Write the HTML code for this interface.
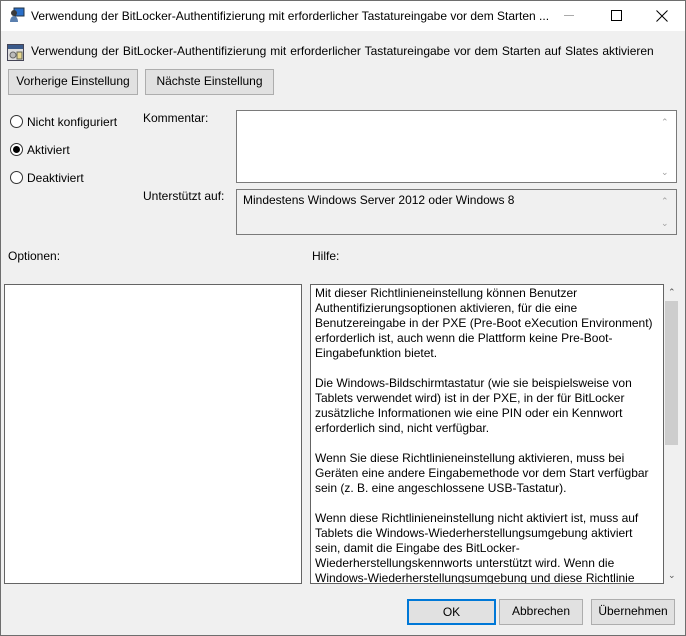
<!DOCTYPE html>
<html><head><meta charset="utf-8"><style>
*{margin:0;padding:0;box-sizing:border-box}
body{width:686px;height:636px;overflow:hidden;background:#f0f0f0;font-family:"Liberation Sans",sans-serif;font-size:12px;color:#000;position:relative}
.a{position:absolute;white-space:nowrap}
.win{position:absolute;left:0;top:0;width:686px;height:636px;border:1px solid #6e6e6e}
.title{position:absolute;left:1px;top:1px;width:684px;height:30px;background:#fff}
.btn{position:absolute;background:#e1e1e1;border:1px solid #adadad;text-align:center;line-height:23px}
.radio{position:absolute;left:10px;width:13px;height:13px;border:1px solid #333;border-radius:50%;background:#fff}
.box{position:absolute;border:1px solid #7a7a7a;background:#fff}
.helpclip{position:absolute;left:311px;top:285px;width:352px;height:298px;overflow:hidden}
.help{position:absolute;left:4px;top:1px;line-height:15px;white-space:pre;font-size:12px}
.arr{position:absolute;color:#a0a0a0;font-size:9px}
</style></head><body>
<div class="win"></div>
<div class="title"></div>
<svg class="a" style="left:9px;top:7px" width="16" height="16" viewBox="0 0 16 16"><rect x="5" y="1" width="10" height="8" fill="#2a6fc9" stroke="#234"/><circle cx="5" cy="6" r="3" fill="#3a3a3a"/><path d="M1 15c0-4 2-6 4-6s4 2 4 6z" fill="#5a7fae"/></svg>
<div class="a" style="left:31px;top:9px">Verwendung der BitLocker-Authentifizierung mit erforderlicher Tastatureingabe vor dem Starten ...</div>
<div class="a" style="left:564px;top:15px;width:10px;height:1px;background:#aaa"></div>
<div class="a" style="left:611px;top:10px;width:11px;height:11px;border:1px solid #000"></div>
<svg class="a" style="left:656px;top:10px" width="12" height="12"><path d="M0.5 0.5L11.5 11.5M11.5 0.5L0.5 11.5" stroke="#000" stroke-width="1"/></svg>
<svg class="a" style="left:7px;top:44px" width="17" height="17" viewBox="0 0 17 17"><rect x="0.5" y="0.5" width="16" height="16" fill="#ddd" stroke="#445"/><rect x="1" y="1" width="15" height="4" fill="#3a5a8a"/><circle cx="6" cy="11" r="3" fill="#bbb" stroke="#666"/><rect x="10" y="8" width="5" height="7" fill="#e8d890" stroke="#665"/></svg>
<div class="a" style="left:31px;top:44px;word-spacing:0.6px">Verwendung der BitLocker-Authentifizierung mit erforderlicher Tastatureingabe vor dem Starten auf Slates aktivieren</div>
<div class="btn" style="left:8px;top:69px;width:130px;height:26px">Vorherige Einstellung</div>
<div class="btn" style="left:145px;top:69px;width:129px;height:26px">Nächste Einstellung</div>
<div class="radio" style="top:115px"></div><div class="a" style="left:27px;top:115px">Nicht konfiguriert</div>
<div class="radio" style="top:143px"></div><div class="a" style="left:13px;top:146px;width:7px;height:7px;border-radius:50%;background:#000"></div><div class="a" style="left:27px;top:143px">Aktiviert</div>
<div class="radio" style="top:171px"></div><div class="a" style="left:27px;top:171px">Deaktiviert</div>
<div class="a" style="left:143px;top:111px">Kommentar:</div>
<div class="box" style="left:236px;top:110px;width:441px;height:73px"></div>
<div class="arr" style="left:661px;top:117px">&#8963;</div><div class="arr" style="left:661px;top:167px">&#8964;</div>
<div class="a" style="left:143px;top:189px">Unterstützt auf:</div>
<div class="box" style="left:236px;top:189px;width:441px;height:46px;background:#f0f0f0"></div>
<div class="a" style="left:243px;top:193px">Mindestens Windows Server 2012 oder Windows 8</div>
<div class="arr" style="left:661px;top:196px">&#8963;</div><div class="arr" style="left:661px;top:218px">&#8964;</div>
<div class="a" style="left:8px;top:249px">Optionen:</div>
<div class="a" style="left:312px;top:249px">Hilfe:</div>
<div class="box" style="left:4px;top:284px;width:298px;height:300px;border-color:#646464"></div>
<div class="box" style="left:310px;top:284px;width:354px;height:300px;border-color:#646464"></div>
<div class="helpclip"><div class="help">Mit dieser Richtlinieneinstellung können Benutzer
Authentifizierungsoptionen aktivieren, für die eine
Benutzereingabe in der PXE (Pre-Boot eXecution Environment)
erforderlich ist, auch wenn die Plattform keine Pre-Boot-
Eingabefunktion bietet.

Die Windows-Bildschirmtastatur (wie sie beispielsweise von
Tablets verwendet wird) ist in der PXE, in der für BitLocker
zusätzliche Informationen wie eine PIN oder ein Kennwort
erforderlich sind, nicht verfügbar.

Wenn Sie diese Richtlinieneinstellung aktivieren, muss bei
Geräten eine andere Eingabemethode vor dem Start verfügbar
sein (z. B. eine angeschlossene USB-Tastatur).

Wenn diese Richtlinieneinstellung nicht aktiviert ist, muss auf
Tablets die Windows-Wiederherstellungsumgebung aktiviert
sein, damit die Eingabe des BitLocker-
Wiederherstellungskennworts unterstützt wird. Wenn die
Windows-Wiederherstellungsumgebung und diese Richtlinie</div></div>
<div class="a" style="left:665px;top:301px;width:13px;height:144px;background:#cdcdcd"></div>
<div class="arr" style="left:668px;top:287px;color:#555">&#8963;</div><div class="arr" style="left:668px;top:570px;color:#555">&#8964;</div>
<div class="btn" style="left:407px;top:599px;width:89px;height:26px;border:2px solid #0078d7;line-height:22px">OK</div>
<div class="btn" style="left:499px;top:599px;width:84px;height:26px">Abbrechen</div>
<div class="btn" style="left:591px;top:599px;width:84px;height:26px">Übernehmen</div>
</body></html>
